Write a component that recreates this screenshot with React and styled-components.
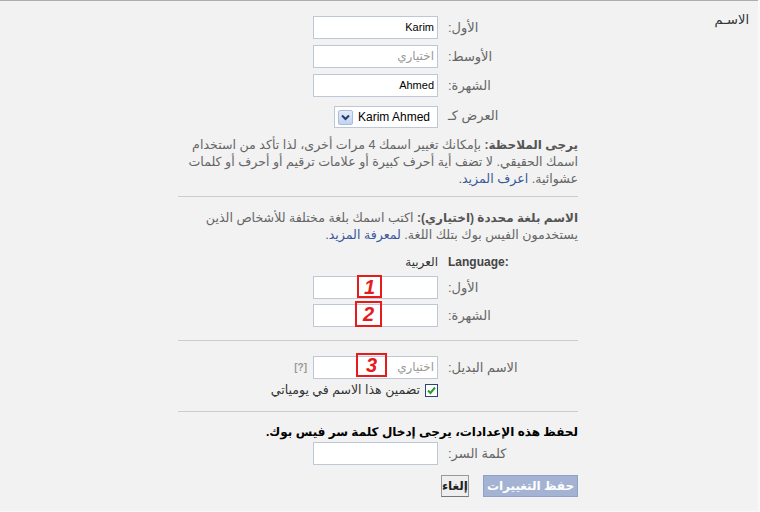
import React from "react";
import styled, { createGlobalStyle } from "styled-components";

const GlobalStyle = createGlobalStyle`
  html, body {
    margin: 0;
    padding: 0;
    background: #f8f8f8;
  }
  body {
    font-family: "Liberation Sans", "DejaVu Sans", sans-serif;
    font-size: 13px;
    color: #333;
  }
`;

const Page = styled.div`
  direction: rtl;
  width: 758px;
  height: 511px;
  box-sizing: border-box;
  border-top: 1px solid #adadad;
  background: #f2f2f2;
  display: flex;
  overflow: hidden;
`;

const SideHeading = styled.div`
  width: 180px;
  box-sizing: border-box;
  padding: 10px 9px 0 0;
  font-size: 13px;
  line-height: 17px;
  color: #333;
`;

const Content = styled.div`
  width: 400px;
  padding-top: 15px;
  display: flex;
  flex-direction: column;
`;

const FieldGrid = styled.div`
  display: grid;
  grid-template-columns: 130px 1fr;
  column-gap: 10px;
  row-gap: ${(p) => p.$gap || 6}px;
  align-items: center;
  margin-top: ${(p) => p.$top || 0}px;
`;

const Label = styled.div`
  text-align: left;
  color: ${(p) => (p.$bold ? "#444" : "#666")};
  font-weight: ${(p) => (p.$bold ? "bold" : "normal")};
  font-size: ${(p) => (p.$bold ? 12 : 13)}px;
  line-height: 17px;
  white-space: nowrap;
`;

const LatinLabel = styled.bdi`
  direction: ltr;
`;

const Field = styled.div`
  display: flex;
  align-items: center;
  gap: ${(p) => p.$gap || 6}px;
  padding-top: ${(p) => p.$pad || 0}px;
  line-height: 17px;
`;

const InputWrap = styled.div`
  position: relative;
  width: 125px;
  height: 23px;
`;

const TextInput = styled.input`
  width: 125px;
  height: 23px;
  box-sizing: border-box;
  margin: 0;
  border: 1px solid #bdc7d8;
  padding: 3px 3px 4px;
  background: #fff;
  font-family: "Liberation Sans", "DejaVu Sans", sans-serif;
  font-size: 11px;
  color: #000;
  outline: none;
  &::placeholder {
    color: #999;
    font-size: 12px;
  }
`;

const SelectBox = styled.div`
  width: 104px;
  height: 22px;
  box-sizing: border-box;
  border: 1px solid #bdc7d8;
  background: #fff;
  display: flex;
  align-items: center;
  justify-content: space-between;
  padding: 0 7px 0 3px;
  font-size: 12px;
  color: #000;
  direction: ltr;
  flex-direction: row-reverse;
`;

const SelectArrow = styled.span`
  width: 15px;
  height: 15px;
  box-sizing: border-box;
  border: 1px solid #a9bde0;
  border-radius: 2px;
  background: linear-gradient(#e3ebf8, #c2d3f0);
  display: flex;
  align-items: center;
  justify-content: center;
`;

const Note = styled.p`
  margin: ${(p) => p.$top || 0}px 0 0;
  line-height: 17px;
  font-size: 12.6px;
  color: #666;
  white-space: nowrap;
  b {
    color: #555;
    font-size: 12px;
  }
`;

const Link = styled.a`
  color: #3b5998;
  text-decoration: none;
`;

const Divider = styled.div`
  height: 1px;
  background: #cccccc;
  margin-top: ${(p) => p.$top}px;
`;

const Value = styled.span`
  color: #333;
  font-size: 12px;
`;

const Help = styled.span`
  color: #999;
  font-weight: bold;
  font-size: 10px;
  direction: ltr;
`;

const CheckRow = styled.label`
  display: flex;
  align-items: center;
  gap: 5px;
  font-size: 12.5px;
  color: #333;
`;

const CheckBox = styled.span`
  width: 13px;
  height: 13px;
  box-sizing: border-box;
  border: 1px solid #29447e;
  background: #fff;
  display: flex;
  align-items: center;
  justify-content: center;
`;

const Marker = styled.span`
  position: absolute;
  top: ${(p) => p.$top}px;
  left: ${(p) => p.$left}px;
  width: ${(p) => p.$w}px;
  height: ${(p) => p.$h}px;
  box-sizing: border-box;
  border: 2px solid #e61b1b;
  color: #e61b1b;
  font-family: "Liberation Sans", sans-serif;
  font-style: italic;
  font-weight: bold;
  font-size: 20px;
  line-height: 1;
  display: flex;
  align-items: center;
  justify-content: center;
  direction: ltr;
`;

const Notice = styled.div`
  margin-top: 12px;
  line-height: 17px;
  font-size: 12px;
  font-weight: bold;
  color: #000;
  white-space: nowrap;
`;

const Actions = styled.div`
  display: flex;
  gap: 14px;
  margin-top: 10px;
`;

const Button = styled.button`
  height: 22px;
  box-sizing: border-box;
  margin: 0;
  padding: 0;
  font-family: "Liberation Sans", "DejaVu Sans", sans-serif;
  font-size: 12px;
  font-weight: bold;
  border: 1px solid ${(p) => (p.$primary ? "#8fa1c7" : "#999")};
  border-bottom-color: ${(p) => (p.$primary ? "#8fa1c7" : "#777")};
  background: ${(p) => (p.$primary ? "#a4b3d3" : "#eeeeee")};
  color: ${(p) => (p.$primary ? "#fff" : "#222")};
  width: ${(p) => (p.$primary ? 95 : 28)}px;
`;

const Chevron = () => (
  <svg width="9" height="7" viewBox="0 0 9 7">
    <path d="M1 1.5 L4.5 5 L8 1.5" fill="none" stroke="#1e3a6e" strokeWidth="2" />
  </svg>
);

const Tick = () => (
  <svg width="11" height="11" viewBox="0 0 11 11">
    <path d="M2 5.5 L4.5 8 L9 2.5" fill="none" stroke="#2c9b2c" strokeWidth="2" />
  </svg>
);

export default function App() {
  return (
    <>
      <GlobalStyle />
      <Page>
        <SideHeading>الاسـم</SideHeading>
        <Content>
          <FieldGrid $gap={6}>
            <Label>الأول:</Label>
            <Field>
              <TextInput defaultValue="Karim" />
            </Field>
            <Label>الأوسط:</Label>
            <Field>
              <TextInput placeholder="اختياري" />
            </Field>
            <Label>الشهرة:</Label>
            <Field>
              <TextInput defaultValue="Ahmed" />
            </Field>
            <Label>العرض كـ</Label>
            <Field $pad={3}>
              <SelectBox>
                <span>Karim Ahmed</span>
                <SelectArrow>
                  <Chevron />
                </SelectArrow>
              </SelectBox>
            </Field>
          </FieldGrid>

          <Note $top={9}>
            <b>يرجى الملاحظة:</b> بإمكانك تغيير اسمك 4 مرات أخرى، لذا تأكد من استخدام
            <br />
            اسمك الحقيقي. لا تضف أية أحرف كبيرة أو علامات ترقيم أو أحرف أو كلمات
            <br />
            عشوائية. <Link href="#">اعرف المزيد.</Link>
          </Note>

          <Divider $top={8} />

          <Note $top={13}>
            <b>الاسم بلغة محددة (اختياري):</b> اكتب اسمك بلغة مختلفة للأشخاص الذين
            <br />
            يستخدمون الفيس بوك بتلك اللغة. <Link href="#">لمعرفة المزيد.</Link>
          </Note>

          <FieldGrid $gap={5} $top={10}>
            <Label $bold>
              <LatinLabel>Language:</LatinLabel>
            </Label>
            <Field>
              <Value>العربية</Value>
            </Field>
            <Label>الأول:</Label>
            <Field>
              <InputWrap>
                <TextInput />
                <Marker $top={-1} $left={44} $w={25} $h={23}>1</Marker>
              </InputWrap>
            </Field>
            <Label>الشهرة:</Label>
            <Field>
              <InputWrap>
                <TextInput />
                <Marker $top={-3} $left={42} $w={27} $h={26}>2</Marker>
              </InputWrap>
            </Field>
          </FieldGrid>

          <Divider $top={13} />

          <FieldGrid $gap={3} $top={15}>
            <Label>الاسم البديل:</Label>
            <Field>
              <InputWrap>
                <TextInput placeholder="اختياري" />
                <Marker $top={-3} $left={43} $w={31} $h={24}>3</Marker>
              </InputWrap>
              <Help>[?]</Help>
            </Field>
            <span />
            <Field>
              <CheckRow>
                <CheckBox>
                  <Tick />
                </CheckBox>
                تضمين هذا الاسم في يومياتي
              </CheckRow>
            </Field>
          </FieldGrid>

          <Divider $top={12} />

          <Notice>لحفظ هذه الإعدادات، يرجى إدخال كلمة سر فيس بوك.</Notice>

          <FieldGrid $top={1}>
            <Label>كلمة السر:</Label>
            <Field>
              <TextInput type="password" />
            </Field>
          </FieldGrid>

          <Actions>
            <Button $primary>حفظ التغييرات</Button>
            <Button>إلغاء</Button>
          </Actions>
        </Content>
      </Page>
    </>
  );
}
